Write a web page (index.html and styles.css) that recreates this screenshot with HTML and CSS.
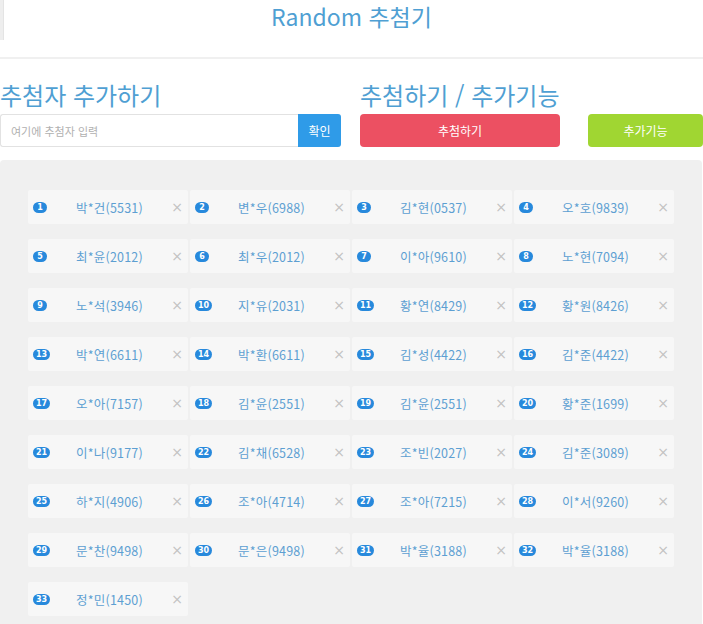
FILE: index.html
```html
<!DOCTYPE html>
<html lang="ko">
<head>
    <meta charset="UTF-8">
    <meta name="viewport" content="width=device-width, initial-scale=1.0">
    <title>Random 추첨기</title>
    <link rel="stylesheet" href="styles.css">
</head>
<body>
    <header class="top">
        <div class="side-strip"></div>
        <h1 class="title">Random 추첨기</h1>
    </header>
    <div class="divider"></div>

    <section class="controls">
        <div class="col col-add">
            <h2 class="section-title">추첨자 추가하기</h2>
            <div class="add-form">
                <input type="text" id="nameInput" placeholder="여기에 추첨자 입력">
                <button class="ok-button" onclick="addName()">확인</button>
            </div>
        </div>
        <div class="col col-actions">
            <h2 class="section-title">추첨하기 / 추가기능</h2>
            <div class="action-row">
                <button class="red-button">추첨하기</button>
                <button class="green-button">추가기능</button>
            </div>
        </div>
    </section>

    <section class="board">
        <div class="card-grid" id="cardGrid"></div>
    </section>

    <script>
        const names = [
            "박*건(5531)", "변*우(6988)", "김*현(0537)", "오*호(9839)",
            "최*윤(2012)", "최*우(2012)", "이*아(9610)", "노*현(7094)",
            "노*석(3946)", "지*유(2031)", "황*연(8429)", "황*원(8426)",
            "박*연(6611)", "박*환(6611)", "김*성(4422)", "김*준(4422)",
            "오*아(7157)", "김*윤(2551)", "김*윤(2551)", "황*준(1699)",
            "이*나(9177)", "김*채(6528)", "조*빈(2027)", "김*준(3089)",
            "하*지(4906)", "조*아(4714)", "조*아(7215)", "이*서(9260)",
            "문*찬(9498)", "문*은(9498)", "박*율(3188)", "박*율(3188)",
            "정*민(1450)"
        ];

        function renderCards() {
            const grid = document.getElementById("cardGrid");
            grid.innerHTML = "";
            names.forEach((name, index) => {
                const card = document.createElement("div");
                card.className = "card";

                const badge = document.createElement("span");
                badge.className = "badge";
                badge.innerText = index + 1;

                const label = document.createElement("span");
                label.className = "card-name";
                label.innerText = name;

                const close = document.createElement("span");
                close.className = "remove";
                close.innerHTML = "&times;";
                close.onclick = function() {
                    names.splice(index, 1);
                    renderCards();
                };

                card.appendChild(badge);
                card.appendChild(label);
                card.appendChild(close);
                grid.appendChild(card);
            });
        }

        function addName() {
            const input = document.getElementById("nameInput");
            const value = input.value.trim();
            if (value) {
                names.push(value);
                input.value = "";
                renderCards();
            }
        }

        renderCards();
    </script>
</body>
</html>
```

FILE: styles.css
```css
body {
    margin: 0;
    font-family: "Noto Sans CJK KR", "Noto Sans", sans-serif;
    background-color: #fff;
}
.top {
    display: flex;
    height: 40px;
}
.side-strip {
    width: 3px;
    height: 40px;
    background-color: #eee;
    border-right: 1px solid #e4e4e4;
}
.title {
    flex: 1;
    margin: 0;
    padding-right: 4px;
    text-align: center;
    font-size: 23px;
    font-weight: normal;
    line-height: 32px;
    color: #4f9fd3;
}
.divider {
    margin-top: 17px;
    height: 2px;
    background-color: #f0f0f0;
}
.controls {
    display: flex;
    gap: 19px;
    padding-top: 17px;
    height: 84px;
}
.col-add {
    width: 341px;
}
.col-actions {
    flex: 1;
}
.section-title {
    margin: 0;
    font-size: 24px;
    font-weight: normal;
    line-height: 38px;
    color: #4f9fd3;
    white-space: nowrap;
}
.add-form {
    display: flex;
    height: 33px;
}
.add-form input {
    flex: 1;
    min-width: 0;
    margin: 0;
    padding: 0 10px;
    border: 1px solid #e2e2e2;
    border-right: none;
    border-radius: 3px 0 0 3px;
    font-family: inherit;
    font-size: 11px;
    color: #555;
    outline: none;
}
.add-form input::placeholder {
    color: #b0b0b0;
}
.ok-button {
    width: 43px;
    border: none;
    border-radius: 0 3px 3px 0;
    background-color: #2f9be8;
    color: #fff;
    font-family: inherit;
    font-size: 12px;
    cursor: pointer;
}
.action-row {
    display: flex;
    justify-content: space-between;
    height: 33px;
}
.red-button,
.green-button {
    border: none;
    border-radius: 4px;
    color: #fff;
    font-family: inherit;
    font-size: 12px;
    cursor: pointer;
}
.red-button {
    width: 200px;
    background-color: #ec5062;
}
.green-button {
    width: 115px;
    background-color: #a0d632;
}
.board {
    background-color: #f0f0f0;
    border-radius: 4px 4px 0 0;
    padding: 30px 28px 40px;
    margin-right: 1px;
}
.card-grid {
    display: grid;
    grid-template-columns: repeat(4, 160px);
    column-gap: 2px;
    row-gap: 15px;
}
.card {
    position: relative;
    height: 34px;
    display: flex;
    align-items: center;
    justify-content: center;
    background-color: #f7f7f7;
    border-radius: 2px;
}
.badge {
    position: absolute;
    left: 5px;
    top: 12px;
    min-width: 8px;
    height: 11px;
    padding: 0 3px;
    border-radius: 6px;
    background-color: #2789dc;
    color: #fff;
    font-family: "DejaVu Sans", sans-serif;
    font-size: 8px;
    font-weight: bold;
    line-height: 11px;
    text-align: center;
}
.card-name {
    padding-left: 3px;
    font-size: 12.5px;
    color: #5d9fd2;
    letter-spacing: 0.2px;
}
.remove {
    position: absolute;
    right: 5px;
    top: 8px;
    font-family: "DejaVu Sans", sans-serif;
    font-size: 14px;
    line-height: 18px;
    color: #c2c2c2;
    cursor: pointer;
}
```
